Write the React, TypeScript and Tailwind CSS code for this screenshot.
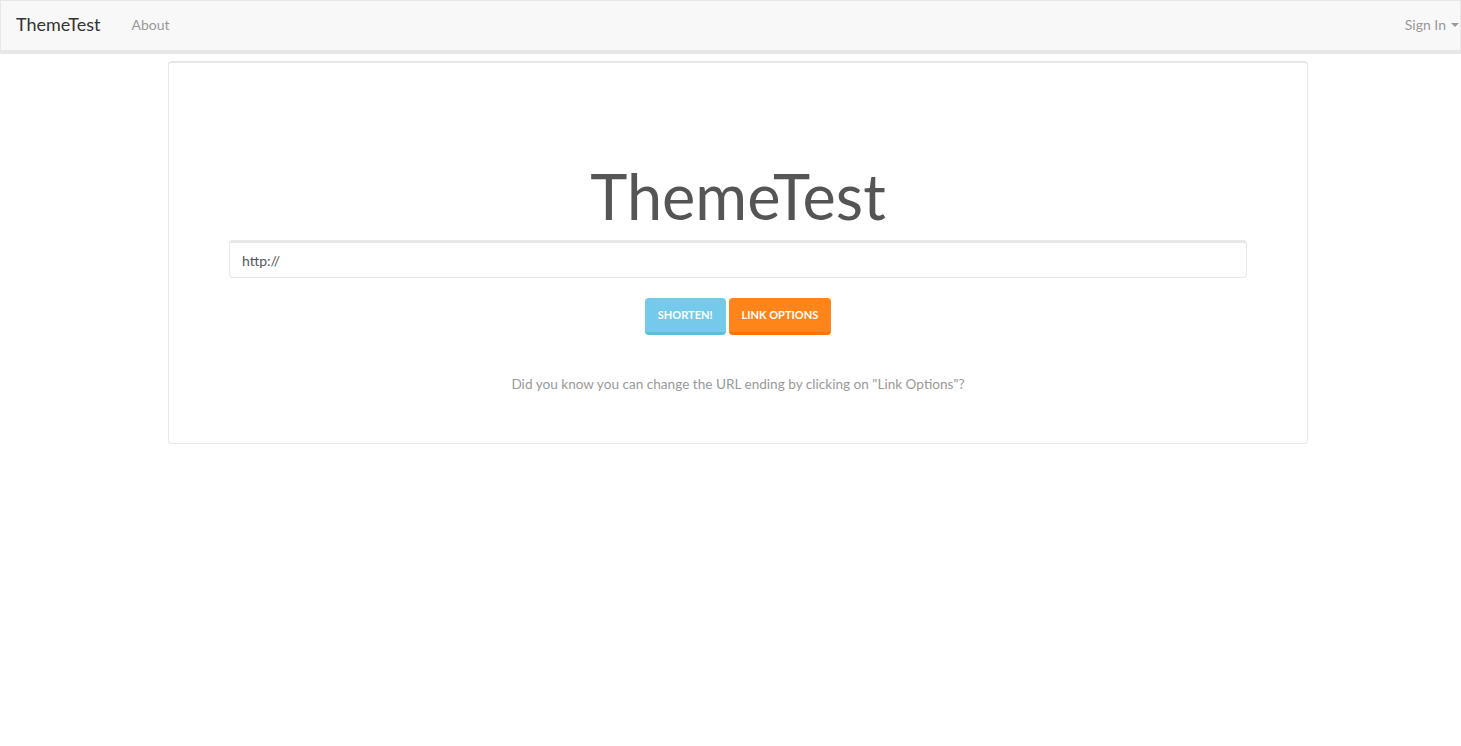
export default function App() {
  return (
    <div className="min-h-screen bg-white text-[14px] text-[#555]" style={{ fontFamily: 'Lato, "Open Sans", sans-serif' }}>
      {/* Navbar */}
      <nav className="h-[54px] bg-[#f8f8f8] border border-[#e7e7e7] border-b-[4px] flex items-stretch">
        <a className="px-[15px] text-[18px] text-[#333] flex items-center h-[47px]">ThemeTest</a>
        <a className="px-[15px] ml-[1px] text-[#999] flex items-center h-[47px]">About</a>
        <div className="flex-1" />
        <a className="pl-[15px] pr-[1px] text-[#999] flex items-center h-[47px] gap-[5px]">
          Sign In
          <svg width="8" height="5" viewBox="0 0 8 5" className="mt-[2px]">
            <path d="M0 0h8L4 4z" fill="#999" />
          </svg>
        </a>
      </nav>

      {/* Content */}
      <div className="w-[1140px] ml-[168px] mt-[7px]">
        <div className="border border-[#e7e7e7] border-t-[2px] rounded-[4px] px-[60px] pt-[98px] pb-[48px] flex flex-col items-center">
          <h1 className="text-[63px] leading-[1.1] text-[#555]">ThemeTest</h1>
          <div className="w-full mt-[10px]">
            <div className="h-[38px] w-full border border-[#e7e7e7] border-t-[3px] rounded-[4px] flex items-center px-[12px] text-[14px] text-[#555]">
              http://
            </div>
          </div>
          <div className="flex gap-[3px] mt-[20px]">
            <button className="h-[37px] px-[13px] bg-[#75caeb] border-b-[3px] border-[#5bc0de] rounded-[4px] text-white text-[11px] font-bold">
              SHORTEN!
            </button>
            <button className="h-[37px] px-[13px] bg-[#ff851b] border-b-[3px] border-[#ff7400] rounded-[4px] text-white text-[11px] font-bold">
              LINK OPTIONS
            </button>
          </div>
          <p className="mt-[39px] text-[13.6px] text-[#999]">
            Did you know you can change the URL ending by clicking on "Link Options"?
          </p>
        </div>
      </div>
    </div>
  )
}
